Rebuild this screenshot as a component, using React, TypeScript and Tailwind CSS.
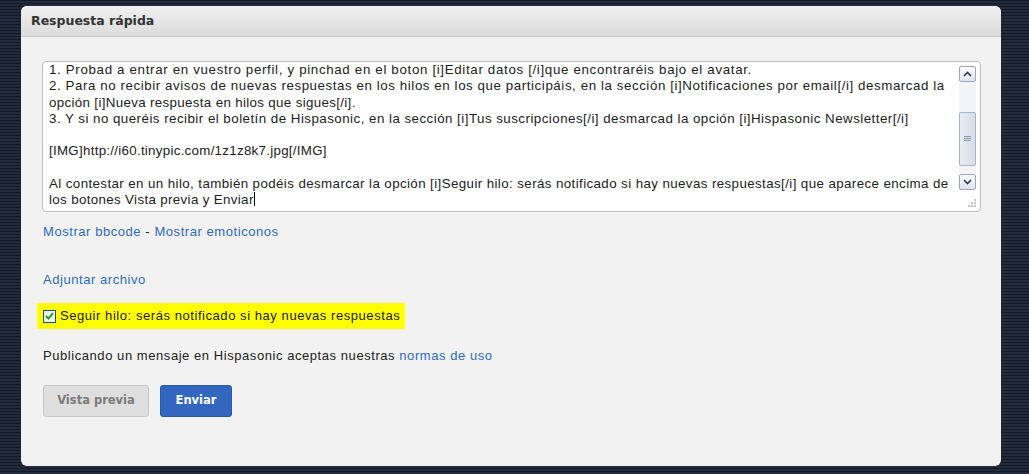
import React from "react";

const lines: { text: string; track: string }[] = [
  { text: "1. Probad a entrar en vuestro perfil, y pinchad en el boton [i]Editar datos [/i]que encontraréis bajo el avatar.", track: "tracking-[0.66px]" },
  { text: "2. Para no recibir avisos de nuevas respuestas en los hilos en los que participáis, en la sección [i]Notificaciones por email[/i] desmarcad la", track: "tracking-[0.57px]" },
  { text: "opción [i]Nueva respuesta en hilos que sigues[/i].", track: "tracking-[0.34px]" },
  { text: "3. Y si no queréis recibir el boletín de Hispasonic, en la sección [i]Tus suscripciones[/i] desmarcad la opción [i]Hispasonic Newsletter[/i]", track: "tracking-[0.47px]" },
  { text: "", track: "" },
  { text: "[IMG]http://i60.tinypic.com/1z1z8k7.jpg[/IMG]", track: "tracking-[0.28px]" },
  { text: "", track: "" },
  { text: "Al contestar en un hilo, también podéis desmarcar la opción [i]Seguir hilo: serás notificado si hay nuevas respuestas[/i] que aparece encima de", track: "tracking-[0.40px]" },
];

const Scrollbar = () => (
  <div className="flex flex-col w-[17px] h-[124px] mt-[4px] mr-[4px] shrink-0">
    <div className="h-[16px] w-[17px] border border-[#9aa6bd] rounded-[2px] bg-gradient-to-b from-[#fdfdff] to-[#dfe3ee] flex items-center justify-center">
      <svg width="9" height="6" viewBox="0 0 9 6">
        <path d="M1 5 L4.5 1.5 L8 5" stroke="#2b3a5c" strokeWidth="1.6" fill="none" />
      </svg>
    </div>
    <div className="flex-1 bg-[#f3f4f8] flex flex-col justify-end py-[1px]">
      <div className="h-[54px] mb-[7px] border border-[#a7b3c9] rounded-[2px] bg-gradient-to-r from-[#e8ebf3] to-[#d7dce9] flex items-center justify-center">
        <svg width="7" height="6" viewBox="0 0 7 6">
          <path d="M0 0.5h7M0 2.5h7M0 4.5h7" stroke="#8a94aa" strokeWidth="1" />
        </svg>
      </div>
    </div>
    <div className="h-[16px] w-[17px] border border-[#9aa6bd] rounded-[2px] bg-gradient-to-b from-[#fdfdff] to-[#dfe3ee] flex items-center justify-center">
      <svg width="9" height="6" viewBox="0 0 9 6">
        <path d="M1 1 L4.5 4.5 L8 1" stroke="#2b3a5c" strokeWidth="1.6" fill="none" />
      </svg>
    </div>
  </div>
);

export default function App() {
  return (
    <div className="w-[1029px] h-[474px] overflow-hidden bg-[#1a2030] bg-[repeating-linear-gradient(to_bottom,#131a27_0px,#131a27_1px,#232b3c_1px,#232b3c_3px)] pt-[6px] pl-[21px]">
      <div className="w-[980px] h-[460px] bg-[#f2f2f2] rounded-[6px] overflow-hidden flex flex-col">
        <div className="h-[31px] shrink-0 bg-gradient-to-b from-[#f0f0f0] to-[#dcdcdc] border-b border-[#c8c8c8] flex items-center pl-[10px]">
          <h2 className="font-['DejaVu_Sans',sans-serif] font-bold text-[12.5px] text-[#333]">
            Respuesta rápida
          </h2>
        </div>

        <div className="flex flex-col pl-[21px] pt-[24px] font-['Liberation_Sans',Arial,sans-serif] text-[13px] tracking-[0.56px]">
          <div className="w-[939px] h-[151px] bg-white border border-[#bdbdbd] rounded-[4px] flex relative overflow-hidden">
            <div className="flex-1 pl-[6px] overflow-hidden text-[#222] text-[13.33px] leading-[16.3px]">
              {lines.map((l, i) => (
                <div key={i} className={`h-[16.3px] whitespace-nowrap ${l.track}`}>
                  {l.text}
                </div>
              ))}
              <div className="h-[16.3px] whitespace-nowrap tracking-[0.35px]">
                los botones Vista previa y Enviar
                <span className="inline-block w-px h-[14px] bg-black align-[-2px]" />
              </div>
            </div>
            <Scrollbar />
            <svg className="absolute right-[3px] bottom-[3px]" width="10" height="10" viewBox="0 0 10 10">
              <g fill="#c4c4c4">
                <rect x="7" y="1" width="2" height="2" />
                <rect x="4" y="4" width="2" height="2" />
                <rect x="7" y="4" width="2" height="2" />
                <rect x="1" y="7" width="2" height="2" />
                <rect x="4" y="7" width="2" height="2" />
                <rect x="7" y="7" width="2" height="2" />
              </g>
            </svg>
          </div>

          <div className="mt-[10px] ml-px text-[#222]">
            <a className="text-[#2f6ac7]">Mostrar bbcode</a> - <a className="text-[#2f6ac7]">Mostrar emoticonos</a>
          </div>

          <div className="mt-[28px] ml-px">
            <a className="text-[#2f6ac7]">Adjuntar archivo</a>
          </div>

          <div className="mt-[14px] -ml-[5px] w-[368px] h-[26px] bg-[#ffff00] flex items-center pl-[6px] gap-[4px] text-[#222]">
            <span className="w-[13px] h-[13px] shrink-0 border border-[#1c5180] bg-gradient-to-br from-[#e6e6e6] to-white flex items-center justify-center">
              <svg width="9" height="8" viewBox="0 0 9 8">
                <path d="M1 4 L3.5 6.5 L8 1.2" stroke="#21a121" strokeWidth="2" fill="none" />
              </svg>
            </span>
            <span className="whitespace-nowrap">Seguir hilo: serás notificado si hay nuevas respuestas</span>
          </div>

          <div className="mt-[17px] ml-px text-[#222]">
            Publicando un mensaje en Hispasonic aceptas nuestras <a className="text-[#2f6ac7]">normas de uso</a>
          </div>

          <div className="mt-[19px] ml-px flex gap-[11px] font-['DejaVu_Sans',sans-serif] font-bold text-[11.5px] tracking-normal">
            <button className="w-[106px] h-[32px] rounded-[3px] bg-[#dedede] border border-[#c6c6c6] text-[#7a7a7a]">
              Vista previa
            </button>
            <button className="w-[72px] h-[32px] rounded-[3px] bg-[#3366bf] border border-[#2a58a8] text-white">
              Enviar
            </button>
          </div>
        </div>
      </div>
    </div>
  );
}
